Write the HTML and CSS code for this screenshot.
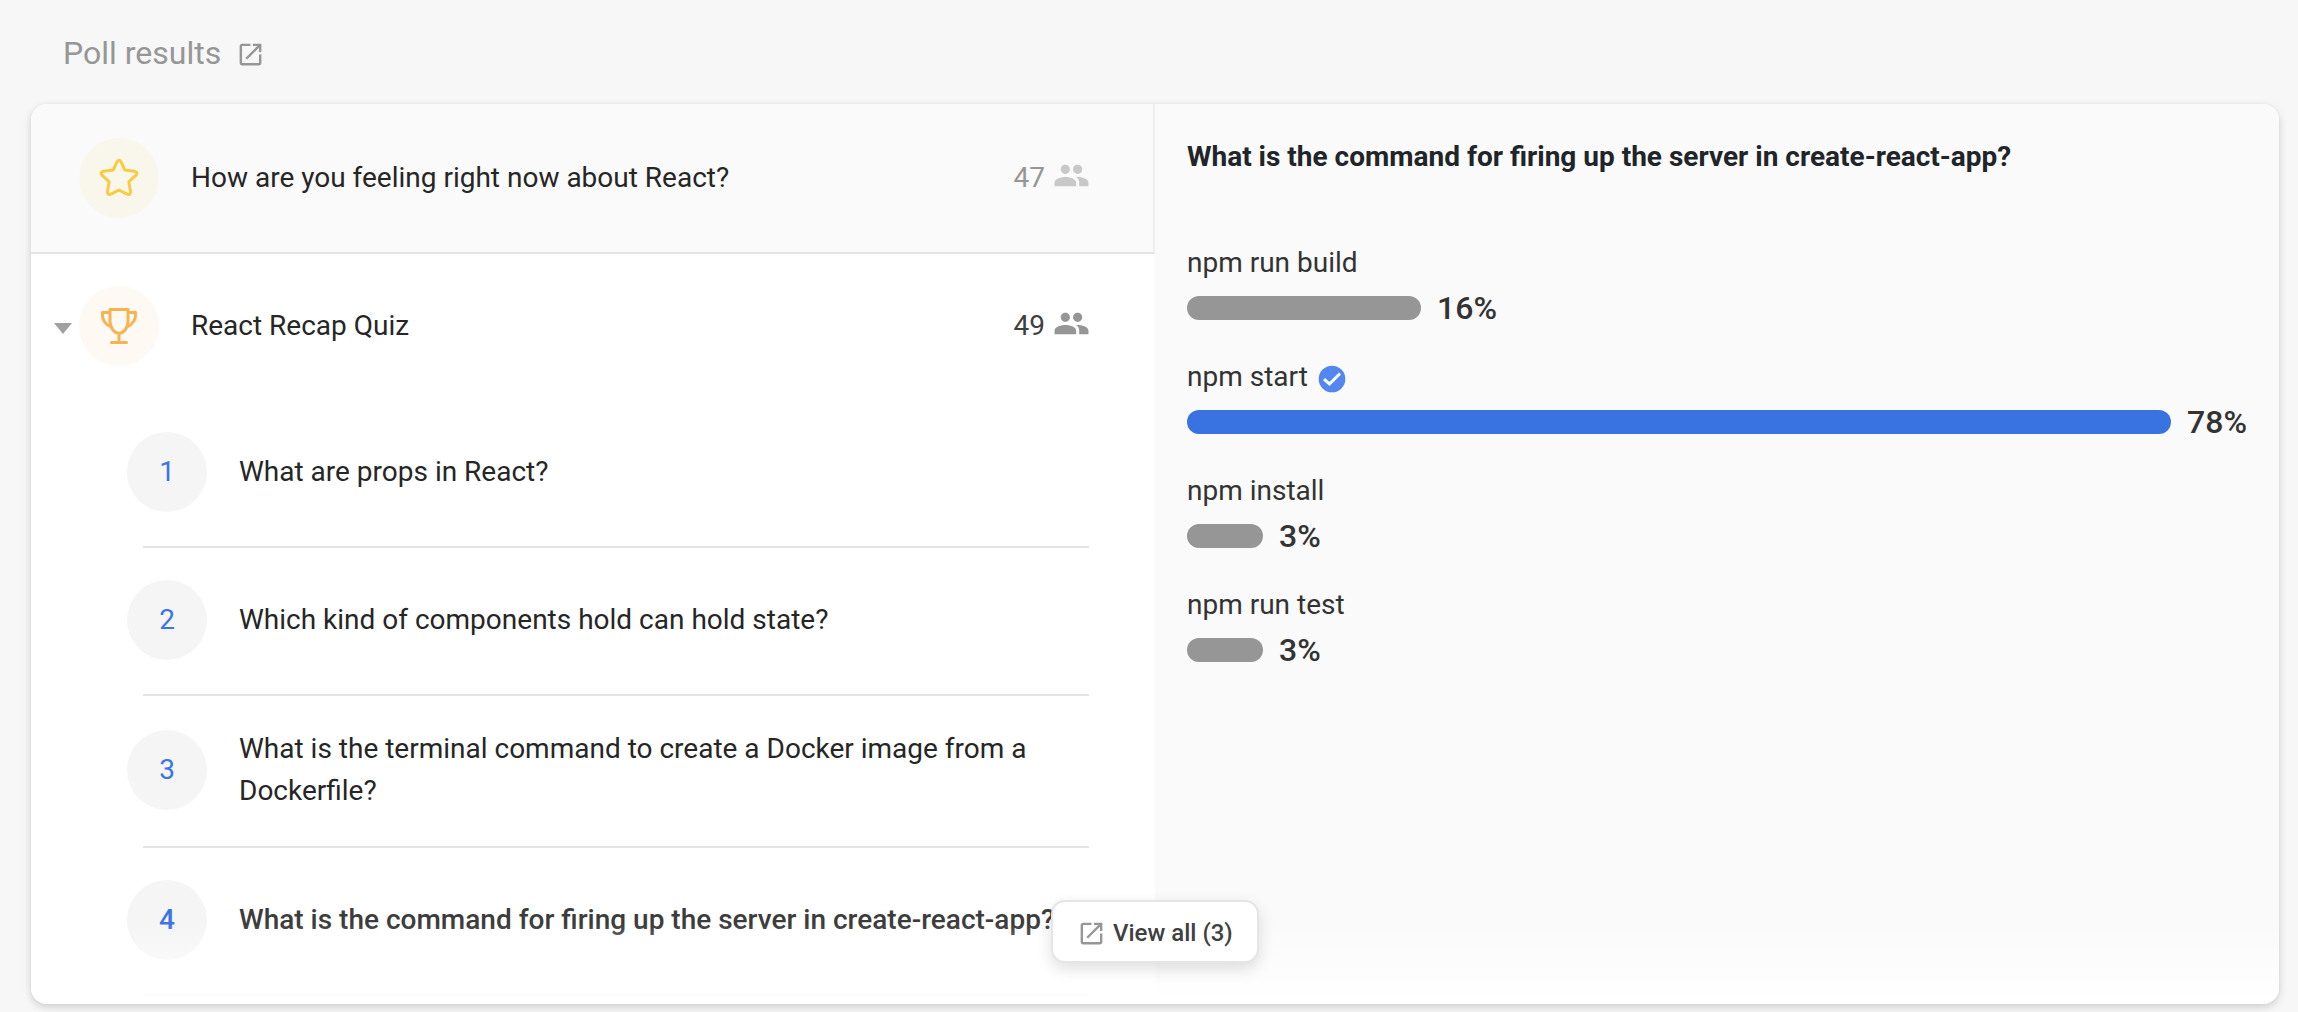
FILE: index.html
```html
<!DOCTYPE html>
<html lang="en">
<head>
<meta charset="utf-8">
<title>Poll results</title>
<link rel="stylesheet" href="styles.css">
</head>
<body>
<svg class="defs" width="0" height="0">
  <symbol id="open" viewBox="0 0 24 24"><path d="M19 19H5V5h7V3H5c-1.100 0-2 .9-2 2v14c0 1.100.9 2 2 2h14c1.100 0 2-.9 2-2v-7h-2v7zM14 3v2h3.590l-9.830 9.830 1.410 1.410L19 6.410V10h2V3h-7z"/></symbol>
  <symbol id="people" viewBox="0 0 24 24"><path d="M16 11c1.660 0 2.990-1.340 2.990-3S17.660 5 16 5s-3 1.340-3 3 1.340 3 3 3zm-8 0c1.660 0 2.990-1.340 2.990-3S9.660 5 8 5 5 6.340 5 8s1.340 3 3 3zm0 2c-2.330 0-7 1.170-7 3.500V19h14v-2.500c0-2.330-4.670-3.500-7-3.500zm8 0c-.29 0-.62.020-.97.050 1.160.84 1.970 1.970 1.970 3.450V19h6v-2.500c0-2.330-4.670-3.500-7-3.500z"/></symbol>
</svg>
<h2 class="title">Poll results <svg class="title-icon"><use href="#open"/></svg></h2>
<main class="card">
  <section class="polls">
    <div class="poll muted">
      <span class="badge star"><svg viewBox="0 0 40 40"><path d="M18 3.800Q20 .8 22 3.800L25.800 12L35.400 13.300Q39.400 14.300 37 17.200L29.800 23.800L31.500 33.200Q31.800 37.600 28 36.200L20 32L12 36.200Q8.200 37.600 8.500 33.200L10.200 23.800L3 17.200Q.6 14.300 4.600 13.300L14.200 12Z"/></svg></span>
      <span class="name">How are you feeling right now about React?</span>
      <span class="count">47 <svg><use href="#people"/></svg></span>
    </div>
    <div class="poll">
      <i class="caret"></i>
      <span class="badge trophy"><svg viewBox="0 0 40 40"><path d="M11 3.500H29V16Q28 26 20 27.500Q12 26 11 16ZM11 6.500H3.500Q2.500 17 12.500 21M29 6.500H36.500Q37.500 17 27.500 21M20 27.500V36.500M12.500 36.500H27.500"/></svg></span>
      <span class="name">React Recap Quiz</span>
      <span class="count">49 <svg><use href="#people"/></svg></span>
    </div>
    <ol class="questions">
      <li><span class="num">1</span><span>What are props in React?</span></li>
      <li><span class="num">2</span><span>Which kind of components hold can hold state?</span></li>
      <li><span class="num">3</span><span>What is the terminal command to create a Docker image from a Dockerfile?</span></li>
      <li class="active"><span class="num">4</span><span>What is the command for firing up the server in create-react-app?</span></li>
    </ol>
  </section>
  <section class="results">
    <h3>What is the command for firing up the server in create-react-app?</h3>
    <div class="option"><div class="label">npm run build</div><div class="meter"><i class="bar" style="width:234px"></i><b>16%</b></div></div>
    <div class="option right"><div class="label">npm start <svg class="check" viewBox="0 0 28 28"><circle cx="14" cy="14" r="13.300"/><path d="M6 14.200L11.500 19L22 8.500"/></svg></div><div class="meter"><i class="bar" style="width:984px"></i><b>78%</b></div></div>
    <div class="option"><div class="label">npm install</div><div class="meter"><i class="bar" style="width:76px"></i><b>3%</b></div></div>
    <div class="option"><div class="label">npm run test</div><div class="meter"><i class="bar" style="width:76px"></i><b>3%</b></div></div>
  </section>
  <div class="fade"></div>
</main>
<button class="view-all"><svg><use href="#open"/></svg><span>View all (3)</span></button>
</body>
</html>
```
FILE: styles.css
```css
* { box-sizing: border-box; }
body { margin: 0; height: 1012px; overflow: hidden; background: #f7f7f7; font-family: Roboto, sans-serif; font-size: 28px; color: #262626; position: relative; }
.defs { position: absolute; }
.title { margin: 0; height: 104px; padding: 32px 0 0 63px; display: flex; align-items: flex-start; gap: 15px; font-size: 32px; line-height: 42px; font-weight: 400; color: #969696; }
.title-icon { width: 29px; height: 29px; margin-top: 8px; fill: #969696; }
.card { position: relative; display: flex; width: 2248px; height: 900px; margin-left: 31px; border-radius: 16px; overflow: hidden; background: #fff; box-shadow: 0 3px 8px rgba(0,0,0,.17), 0 0 3px rgba(0,0,0,.04); }
.polls { width: 1124px; flex: none; }
.poll { position: relative; display: flex; align-items: center; height: 146px; padding: 32px 66px 34px 48px; }
.poll.muted { height: 150px; padding: 34px 64px 34px 48px; background: #fafafa; border-bottom: 2px solid #e4e4e4; border-right: 2px solid #eee; }
.badge, .num { width: 80px; height: 80px; border-radius: 50%; flex: none; display: flex; align-items: center; justify-content: center; }
.badge svg { width: 40px; height: 40px; fill: none; stroke-width: 3; stroke-linejoin: round; stroke-linecap: round; }
.star { background: #f9f7eb; stroke: #f9cb43; }
.trophy { background: #fff9f3; stroke: #f7b352; }
.name { margin: -2px 0 0 32px; flex: 1; }
.count { display: flex; align-items: center; gap: 8px; margin-top: -2px; color: #404040; }
.count svg { width: 37px; height: 37px; fill: #969696; margin: -4px -1px 0 0; }
.muted .count { color: #969696; }
.muted .count svg { fill: #c8c8c8; }
.caret { position: absolute; left: 23px; top: 69px; border: 9px solid transparent; border-top: 11px solid #a0a0a0; border-bottom: 0; }
.questions { list-style: none; margin: 0; padding: 0 66px 0 96px; }
.questions li { display: flex; align-items: center; gap: 32px; padding: 32px 0 36px; line-height: 42px; background: linear-gradient(#e4e4e4, #e4e4e4) 16px 100% / 100% 2px no-repeat; }
.num { background: #f5f5f5; color: #3b74e5; }
.questions .active { font-weight: 500; white-space: nowrap; color: #3c3c3c; }
.results { flex: 1; background: #fafafa; padding: 32px 32px 0; }
h3 { margin: 0 0 64px; font-size: 28px; line-height: 42px; font-weight: 700; color: #212529; }
.option { height: 114px; color: #333; }
.label { height: 42px; line-height: 42px; display: flex; align-items: center; gap: 10px; }
.check { width: 28px; height: 28px; fill: #5387ef; margin-top: 4px; }
.check path { fill: none; stroke: #fff; stroke-width: 3; }
.meter { display: flex; align-items: center; gap: 16px; height: 48px; }
.bar { height: 24px; border-radius: 12px; background: #969696; }
.right .bar { background: #3973e1; }
.meter b { font-size: 32px; font-weight: 500; }
.fade { position: absolute; left: 0; right: 0; bottom: 0; height: 80px; background: linear-gradient(rgba(255,255,255,0), #fff); }
.view-all { position: absolute; left: 1051px; top: 900px; width: 208px; height: 63px; padding: 0 0 0 24px; border: 2px solid #e5e5e5; border-radius: 14px; background: #fff; display: flex; align-items: center; gap: 7px; font: 500 24px Roboto, sans-serif; color: #404040; box-shadow: 0 6px 16px rgba(0,0,0,.13); }
.view-all svg { width: 29px; height: 29px; fill: #969696; margin-top: 3px; }
.view-all span { margin-top: 2px; }
```
